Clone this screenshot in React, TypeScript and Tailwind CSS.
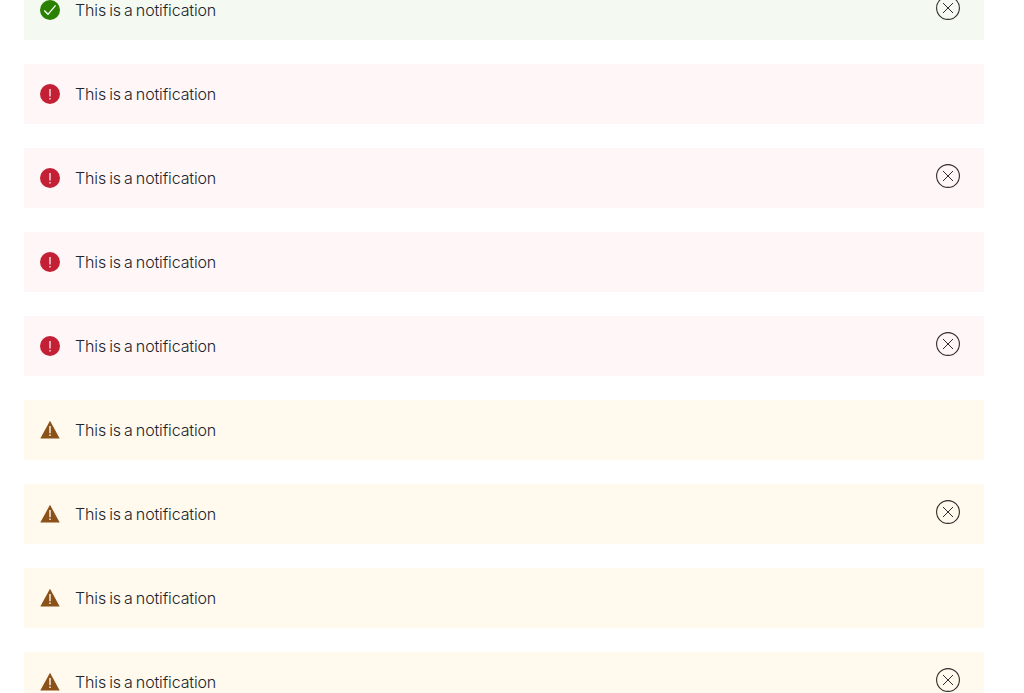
type Kind = "success" | "error" | "warning";

const backgrounds: Record<Kind, string> = {
  success: "bg-[#f4f9f2]",
  error: "bg-[#fff6f7]",
  warning: "bg-[#fff9ee]",
};

function StatusIcon({ kind }: { kind: Kind }) {
  if (kind === "warning") {
    return (
      <svg className="size-5 shrink-0" viewBox="0 0 20 20" aria-hidden="true">
        <path d="M10 .8 19.7 18.6H.3Z" fill="#8a5118" />
        <path d="M10 6v7.3M10 14.4v1.7" stroke="#fff9ee" strokeWidth="1.4" />
      </svg>
    );
  }
  return (
    <svg className="size-5 shrink-0" viewBox="0 0 20 20" aria-hidden="true">
      <circle cx="10" cy="10" r="10" fill={kind === "success" ? "#2a8000" : "#c32036"} />
      {kind === "success" ? (
        <path d="m4.3 10.5 3.7 3.8 7.6-9" fill="none" stroke="#fff" strokeWidth="1.3" />
      ) : (
        <path d="M10 5v7.6M10 14v1.6" stroke="#fff6f7" strokeWidth="1.25" />
      )}
    </svg>
  );
}

function Notification({ kind, closable }: { kind: Kind; closable: boolean }) {
  return (
    <div className={`flex h-[60px] shrink-0 items-start px-4 pt-4 ${backgrounds[kind]}`}>
      <div className="flex h-7 flex-1 items-center gap-[15px]">
        <StatusIcon kind={kind} />
        <p className="font-['Inter',sans-serif] text-base leading-7 font-light tracking-[-0.14px] [word-spacing:-1.2px] text-[#20242c]">
          This is a notification
        </p>
      </div>
      {closable && (
        <button aria-label="Close" className="mr-2 size-6">
          <svg className="size-6" viewBox="0 0 24 24" fill="none" stroke="#2c2c2c" strokeWidth="1.1">
            <circle cx="12" cy="12" r="11.4" />
            <path d="m7 7 10 10M17 7 7 17" strokeWidth="1" />
          </svg>
        </button>
      )}
    </div>
  );
}

const items: { kind: Kind; closable: boolean }[] = [
  { kind: "success", closable: true },
  { kind: "error", closable: false },
  { kind: "error", closable: true },
  { kind: "error", closable: false },
  { kind: "error", closable: true },
  { kind: "warning", closable: false },
  { kind: "warning", closable: true },
  { kind: "warning", closable: false },
  { kind: "warning", closable: true },
];

export default function App() {
  return (
    <main className="h-[693px] overflow-hidden bg-white pr-10 pl-6">
      <div className="-mt-5 flex flex-col gap-6">
        {items.map((item, i) => (
          <Notification key={i} {...item} />
        ))}
      </div>
    </main>
  );
}
